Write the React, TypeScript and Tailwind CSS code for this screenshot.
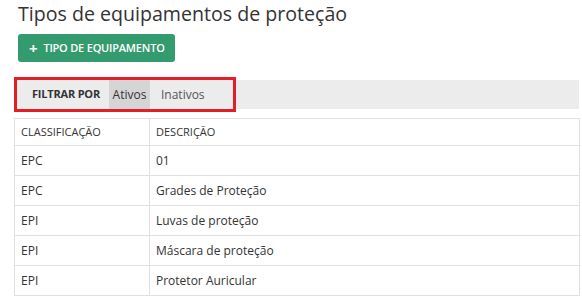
import React from 'react';

const rows = [
  { cls: 'EPC', desc: '01' },
  { cls: 'EPC', desc: 'Grades de Proteção' },
  { cls: 'EPI', desc: 'Luvas de proteção' },
  { cls: 'EPI', desc: 'Máscara de proteção' },
  { cls: 'EPI', desc: 'Protetor Auricular' },
];

const App: React.FC = () => {
  return (
    <div className="relative h-[305px] w-[582px] overflow-hidden bg-white font-['Open_Sans',sans-serif] text-[#333]">
      <h1 className="pl-[18px] pt-[1px] text-[19.6px] leading-[26px] font-normal text-[#333]">Tipos de equipamentos de proteção</h1>
      <div className="pl-[18px] pt-[7px]">
        <button className="flex h-[28px] w-[157px] items-center gap-[6px] rounded-[3px] bg-[#339b6e] pl-[11px] text-[11px] font-semibold tracking-[-0.2px] text-white">
          <span className="text-[15px] leading-none font-bold">+</span>
          <span>TIPO DE EQUIPAMENTO</span>
        </button>
      </div>

      <div className="ml-[14px] mt-[18px] flex h-[29px] w-[565px] items-stretch bg-[#ececec]">
        <span className="flex items-center pl-[18px] pr-[9px] text-[11px] font-bold tracking-[-0.2px] text-[#333]">FILTRAR POR</span>
        <span className="flex w-[41px] items-center justify-center bg-[#d5d5d5] text-[12px] text-[#333]">Ativos</span>
        <span className="flex items-center pl-[11px] text-[12px] text-[#555]">Inativos</span>
      </div>

      <div className="pointer-events-none absolute left-[14px] top-[77px] h-[35px] w-[222px] border-[3px] border-[#e41e26]" />

      <table className="ml-[14px] mt-[9px] w-[566px] border-collapse text-[12px] text-[#333]">
        <thead>
          <tr className="h-[27px]">
            <th className="w-[135px] border border-[#e0e0e0] pl-[6px] text-left text-[11px] font-normal">CLASSIFICAÇÃO</th>
            <th className="border border-[#e0e0e0] pl-[6px] text-left text-[11px] font-normal">DESCRIÇÃO</th>
          </tr>
        </thead>
        <tbody>
          {rows.map((r, i) => (
            <tr key={i} className="h-[30px]">
              <td className="border border-[#e0e0e0] pl-[6px]">{r.cls}</td>
              <td className="border border-[#e0e0e0] pl-[6px]">{r.desc}</td>
            </tr>
          ))}
        </tbody>
      </table>
    </div>
  );
};

export default App;
